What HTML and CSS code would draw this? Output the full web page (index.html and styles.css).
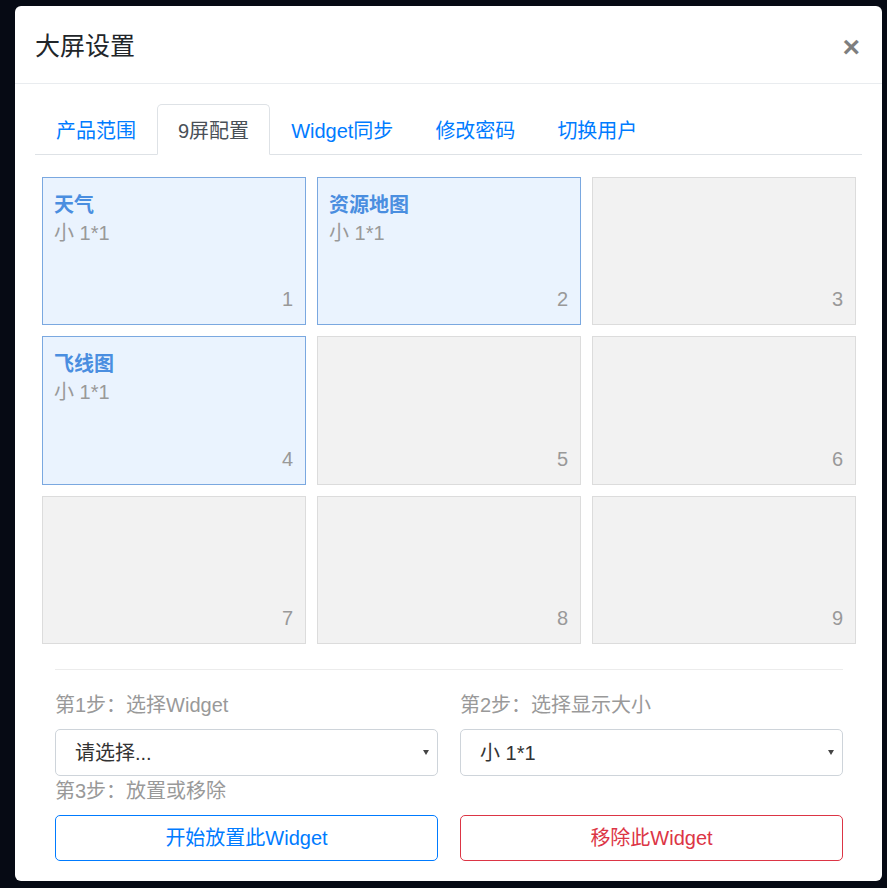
FILE: index.html
```html
<!DOCTYPE html>
<html lang="zh-CN">
<head>
<meta charset="utf-8">
<title>大屏设置</title>
<link rel="stylesheet" href="styles.css">
</head>
<body>
<div class="modal">
  <div class="modal-header">
    <h5 class="modal-title">大屏设置</h5>
    <button class="close" type="button">×</button>
  </div>
  <div class="modal-body">
    <ul class="nav-tabs">
      <li class="nav-link">产品范围</li>
      <li class="nav-link active">9屏配置</li>
      <li class="nav-link">Widget同步</li>
      <li class="nav-link">修改密码</li>
      <li class="nav-link">切换用户</li>
    </ul>
    <div class="grid">
      <div class="cell filled"><div class="cell-title">天气</div><div class="cell-size">小 1*1</div><div class="cell-num">1</div></div>
      <div class="cell filled"><div class="cell-title">资源地图</div><div class="cell-size">小 1*1</div><div class="cell-num">2</div></div>
      <div class="cell"><div class="cell-num">3</div></div>
      <div class="cell filled"><div class="cell-title">飞线图</div><div class="cell-size">小 1*1</div><div class="cell-num">4</div></div>
      <div class="cell"><div class="cell-num">5</div></div>
      <div class="cell"><div class="cell-num">6</div></div>
      <div class="cell"><div class="cell-num">7</div></div>
      <div class="cell"><div class="cell-num">8</div></div>
      <div class="cell"><div class="cell-num">9</div></div>
    </div>
    <div class="controls">
      <hr class="divider">
      <div class="row">
        <div class="col">
          <div class="label">第1步：选择Widget</div>
          <div class="select"><span>请选择...</span><i class="caret"></i></div>
          <div class="label">第3步：放置或移除</div>
          <button class="btn btn-primary" type="button">开始放置此Widget</button>
        </div>
        <div class="col">
          <div class="label">第2步：选择显示大小</div>
          <div class="select"><span>小 1*1</span><i class="caret"></i></div>
          <div class="label"></div>
          <button class="btn btn-danger" type="button">移除此Widget</button>
        </div>
      </div>
    </div>
  </div>
</div>
</body>
</html>
```

FILE: styles.css
```css
* { box-sizing: border-box; }
html, body { margin: 0; padding: 0; }
body {
  background: #060a14;
  font-family: "Liberation Sans", "Noto Sans CJK SC", sans-serif;
  font-size: 20px;
  line-height: 30px;
  color: #212529;
  width: 887px;
  height: 888px;
  overflow: hidden;
}
.modal {
  margin: 6px 5px 0 15px;
  width: 867px;
  background: #fff;
  border-radius: 6px;
}
.modal-header {
  display: flex;
  align-items: center;
  padding: 22px 20px 18px 20px;
  border-bottom: 1px solid #e9ecef;
}
.modal-title {
  margin: 0;
  font-size: 25px;
  font-weight: 400;
  line-height: 37px;
  color: #212529;
}
.close {
  margin-left: auto;
  margin-right: 2px;
  border: 0;
  background: none;
  padding: 0;
  font-family: "Liberation Sans", sans-serif;
  font-size: 30px;
  font-weight: 700;
  line-height: 30px;
  color: #000;
  opacity: .5;
}
.modal-body {
  padding: 20px 20px 20px 20px;
}
.nav-tabs {
  list-style: none;
  margin: 0;
  padding: 0 0 0 1px;
  display: flex;
  border-bottom: 1px solid #dee2e6;
}
.nav-link {
  padding: 11px 20px 8px 20px;
  margin-bottom: -1px;
  border: 1px solid transparent;
  border-top-left-radius: 5px;
  border-top-right-radius: 5px;
  color: #007bff;
}
.nav-link:first-child { margin-left: -1px; }
.nav-link.active {
  color: #495057;
  background: #fff;
  border-color: #dee2e6 #dee2e6 #fff;
}
.grid {
  display: grid;
  grid-template-columns: repeat(3, 264px);
  grid-template-rows: 148px 149px 148px;
  gap: 11px 11px;
  padding: 22px 7px 0 7px;
}
.cell {
  display: flex;
  flex-direction: column;
  background: #f2f2f2;
  border: 1px solid #dcdcdc;
  padding: 11px 11px 10px 11px;
}
.cell.filled {
  background: #eaf3fe;
  border-color: #7aa8e0;
}
.cell-title {
  font-weight: 700;
  color: #4a8ee0;
  line-height: 30px;
  margin-top: 1px;
}
.cell-size {
  color: #999;
  line-height: 26px;
}
.cell-num {
  margin-top: auto;
  align-self: flex-end;
  color: #999;
  padding-right: 1px;
}
.controls {
  padding: 0 19px 0 20px;
}
.divider {
  margin: 25px 0 20px 0;
  border: 0;
  border-top: 1px solid #ececec;
}
.row {
  display: flex;
  gap: 22px;
}
.col {
  flex: 1;
  display: flex;
  flex-direction: column;
}
.label {
  color: #999;
  height: 30px;
  line-height: 30px;
  margin-bottom: 9px;
}
.select {
  position: relative;
  display: flex;
  align-items: center;
  height: 47px;
  border: 1px solid #ced4da;
  border-radius: 5px;
  padding: 0 19px;
  color: #333;
}
.caret {
  position: absolute;
  right: 8px;
  top: 20px;
  width: 0;
  height: 0;
  border-left: 3px solid transparent;
  border-right: 3px solid transparent;
  border-top: 5px solid #444;
}
.btn {
  height: 46px;
  background: #fff;
  border: 1px solid;
  border-radius: 5px;
  font-family: inherit;
  font-size: 20px;
  line-height: 30px;
  padding: 0;
}
.btn-primary { color: #007bff; border-color: #007bff; }
.btn-danger { color: #dc3545; border-color: #dc3545; }
```
